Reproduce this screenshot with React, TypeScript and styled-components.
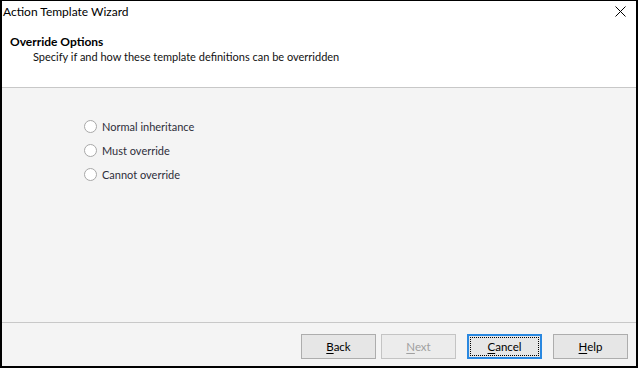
import React from "react";
import styled, { createGlobalStyle } from "styled-components";

const Global = createGlobalStyle`
  html, body { margin: 0; padding: 0; background: #ffffff; }
  * { box-sizing: border-box; }
  body { font-family: Lato, "Noto Sans", sans-serif; font-size: 11px; color: #000; }
`;

const Window = styled.div`
  width: 638px;
  height: 368px;
  border-top: 1px solid #000;
  border-left: 2px solid #000;
  border-right: 2px solid #000;
  border-bottom: 2px solid #000;
  display: flex;
  flex-direction: column;
  background: #f4f4f4;
  overflow: hidden;
`;

const TitleBar = styled.div`
  height: 23px;
  display: flex;
  align-items: center;
  justify-content: space-between;
  background: #fff;
  padding: 0 6px 0 1px;
`;

const TitleText = styled.span`
  font-size: 12px;
  line-height: 16px;
  color: #000;
  margin-top: -2px;
`;

const CloseBtn = styled.div`
  width: 20px;
  height: 20px;
  display: flex;
  align-items: center;
  justify-content: center;
  margin-top: -2px;
`;

const Header = styled.div`
  height: 64px;
  background: #fff;
  border-bottom: 1px solid #c8c8c8;
  padding: 10px 0 0 8px;
  display: flex;
  flex-direction: column;
`;

const HeaderTitle = styled.div`
  font-weight: 700;
  font-size: 12px;
  line-height: 15px;
`;

const HeaderSub = styled.div`
  font-size: 11px;
  line-height: 15px;
  padding-left: 23px;
  color: #111;
`;

const Body = styled.div`
  flex: 1;
  padding: 30px 0 0 82px;
  display: flex;
  flex-direction: column;
  gap: 8px;
`;

const RadioRow = styled.label`
  display: flex;
  align-items: center;
  gap: 5px;
  height: 16px;
  color: #2e2e3a;
  font-size: 11px;
`;

const RadioCircle = styled.span`
  width: 13px;
  height: 13px;
  border-radius: 50%;
  border: 1px solid #a8a8a8;
  background: #fff;
  display: inline-block;
`;

const Footer = styled.div`
  height: 44px;
  border-top: 1px solid #c8c8c8;
  display: flex;
  align-items: flex-start;
  justify-content: flex-end;
  padding: 11px 8px 0 0;
`;

const Button = styled.button<{ $disabled?: boolean; $focused?: boolean; $gap?: number }>`
  width: 75px;
  height: 25px;
  margin-left: ${(p) => p.$gap ?? 0}px;
  font-family: Lato, "Noto Sans", sans-serif;
  font-size: 11.5px;
  color: ${(p) => (p.$disabled ? "#a0a0a0" : "#000")};
  background: ${(p) => (p.$disabled ? "#ececec" : "#e6e6e6")};
  border: 1px solid ${(p) => (p.$focused ? "#2a88e0" : p.$disabled ? "#c4c4c4" : "#adadad")};
  padding: 0;
  position: relative;
  display: flex;
  align-items: center;
  justify-content: center;
  ${(p) => (p.$focused ? "box-shadow: inset 0 0 0 1px #2a88e0;" : "")}
`;

const FocusRect = styled.span`
  position: absolute;
  inset: 2px;
  border: 1px dotted #000;
`;

const Mnemonic = styled.span`
  text-decoration: underline;
  text-underline-offset: 2px;
`;

const options = ["Normal inheritance", "Must override", "Cannot override"];

export default function App() {
  return (
    <>
      <Global />
      <Window>
        <TitleBar>
          <TitleText>Action Template Wizard</TitleText>
          <CloseBtn>
            <svg width="11" height="11" viewBox="0 0 11 11">
              <path d="M0.5 0.5 L10.5 10.5 M10.5 0.5 L0.5 10.5" stroke="#000" strokeWidth="1" />
            </svg>
          </CloseBtn>
        </TitleBar>
        <Header>
          <HeaderTitle>Override Options</HeaderTitle>
          <HeaderSub>Specify if and how these template definitions can be overridden</HeaderSub>
        </Header>
        <Body>
          {options.map((o) => (
            <RadioRow key={o}>
              <RadioCircle />
              {o}
            </RadioRow>
          ))}
        </Body>
        <Footer>
          <Button>
            <span><Mnemonic>B</Mnemonic>ack</span>
          </Button>
          <Button $disabled $gap={5}>
            <span><Mnemonic>N</Mnemonic>ext</span>
          </Button>
          <Button $focused $gap={11}>
            <FocusRect />
            <span><Mnemonic>C</Mnemonic>ancel</span>
          </Button>
          <Button $gap={11}>
            <span><Mnemonic>H</Mnemonic>elp</span>
          </Button>
        </Footer>
      </Window>
    </>
  );
}
